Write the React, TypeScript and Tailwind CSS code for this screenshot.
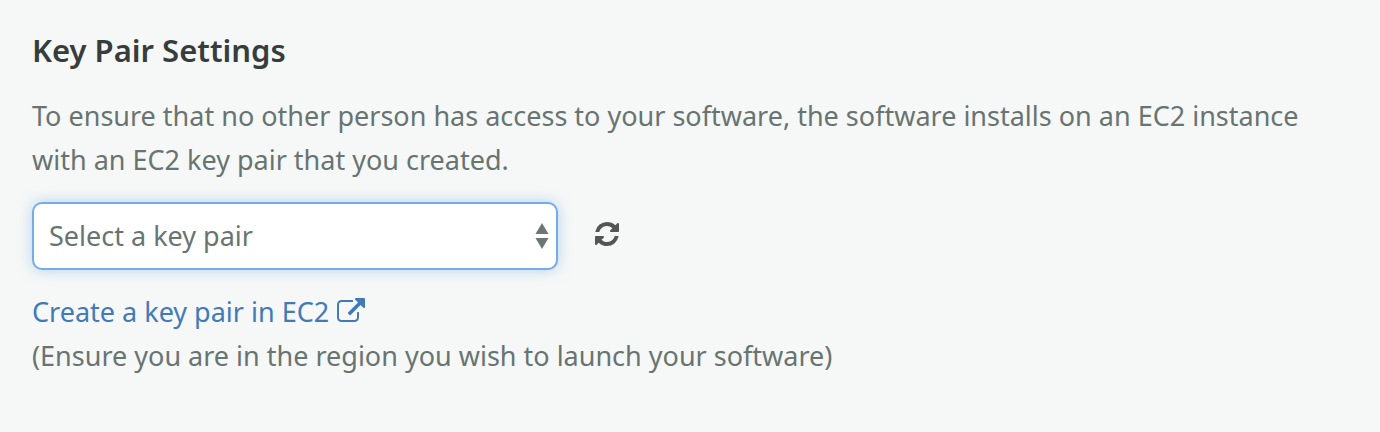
import { useState } from 'react';

const RefreshIcon = () => (
  <svg viewBox="0 0 1536 1536" className="size-6" fill="currentColor" aria-hidden="true">
    <path d="M1511 928q0 5-1 7-64 268-268 434.5t-478 166.5q-146 0-282.5-55t-243.5-157l-129 129q-19 19-45 19t-45-19-19-45v-448q0-26 19-45t45-19h448q26 0 45 19t19 45-19 45l-137 137q71 66 161 102t187 36q134 0 250-65t186-179q11-17 53-117 8-23 30-23h192q13 0 22.5 9.5t9.5 22.5zm25-800v448q0 26-19 45t-45 19h-448q-26 0-45-19t-19-45 19-45l138-138q-148-137-349-137-134 0-250 65t-186 179q-11 17-53 117-8 23-30 23h-199q-13 0-22.5-9.5t-9.5-22.5v-7q65-268 270-434.5t480-166.5q146 0 284 55.5t245 156.5l130-129q19-19 45-19t45 19 19 45z" />
  </svg>
);

const ExternalLinkIcon = () => (
  <svg viewBox="0 0 1792 1536" className="mb-1 h-6 w-7" fill="currentColor" aria-hidden="true">
    <path d="M1408 928v320q0 119-84.5 203.5t-203.5 84.5h-832q-119 0-203.5-84.5t-84.5-203.5v-832q0-119 84.5-203.5t203.5-84.5h704q14 0 23 9t9 23v64q0 14-9 23t-23 9h-704q-66 0-113 47t-47 113v832q0 66 47 113t113 47h832q66 0 113-47t47-113v-320q0-14 9-23t23-9h64q14 0 23 9t9 23zm384-864v512q0 26-19 45t-45 19-45-19l-176-176-652 652q-10 10-23 10t-23-10l-114-114q-10-10-10-23t10-23l652-652-176-176q-19-19-19-45t19-45 45-19h512q26 0 45 19t19 45z" />
  </svg>
);

const KeyPairSelect = () => {
  const [keyPair, setKeyPair] = useState('');

  return (
    <div className="relative w-full max-w-[526px]">
      <select
        id="key-pair"
        aria-label="Key pair"
        value={keyPair}
        onChange={(e) => setKeyPair(e.target.value)}
        className="block h-[68px] w-full appearance-none rounded-[10px] border-2 border-[#74ade6] bg-white pr-10 pl-[15px] shadow-[0_0_14px_rgba(116,173,230,0.5)] outline-none"
      >
        <option value="">Select a key pair</option>
      </select>
      <svg
        viewBox="0 0 14 26"
        className="pointer-events-none absolute top-[21px] right-[9px] h-[26px] w-[14px]"
        fill="#6b7775"
        aria-hidden="true"
      >
        <path d="M7 0L13.500 11H.5z" />
        <path d="M7 26L.5 15h13z" />
      </svg>
    </div>
  );
};

const App = () => {
  return (
    <section className="min-h-screen bg-[#f6f8f7] px-8 pt-7 pb-12 font-['Noto_Sans',sans-serif] text-[27px] leading-[44px] font-normal text-[#687472]">
      <h2 className="mb-[22px] text-[31px] font-semibold text-[#373d3c]">Key Pair Settings</h2>
      <p className="mb-5">
        To ensure that no other person has access to your software, the software installs on an EC2 instance
        with an EC2 key pair that you created.
      </p>

      <div className="mb-5 flex items-center gap-9">
        <KeyPairSelect />
        <button type="button" aria-label="Refresh key pairs" className="mb-1 pl-px text-[#555555]">
          <RefreshIcon />
        </button>
      </div>

      <a href="#" className="inline-flex items-center gap-2 align-top text-[#427ab8]">
        Create a key pair in EC2
        <ExternalLinkIcon />
      </a>
      <p>(Ensure you are in the region you wish to launch your software)</p>
    </section>
  );
};

export default App;
